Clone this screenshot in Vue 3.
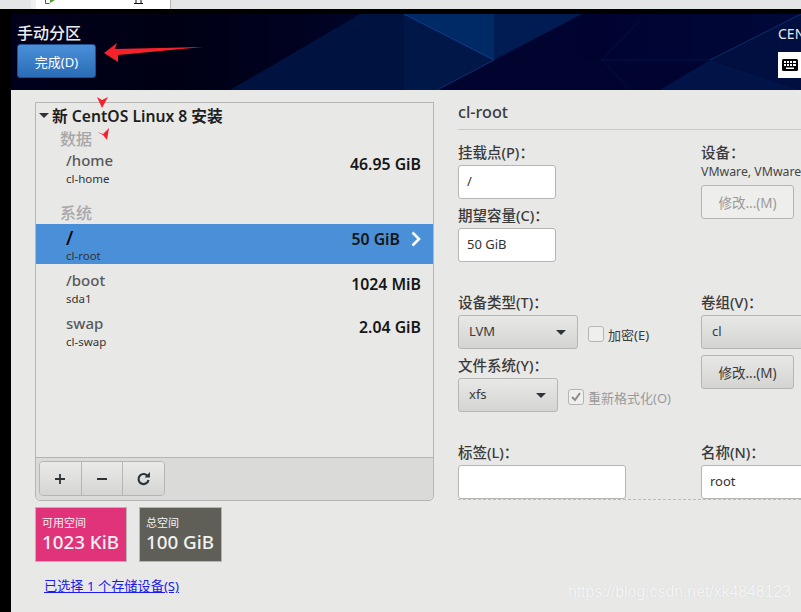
<script setup>
const groups = [
  { name: "数据", cls: "g-data", rows: [{ mount: "/home", dev: "cl-home", size: "46.95 GiB" }] },
  {
    name: "系统",
    cls: "g-sys",
    rows: [
      { mount: "/", dev: "cl-root", size: "50 GiB", selected: true },
      { mount: "/boot", dev: "sda1", size: "1024 MiB" },
      { mount: "swap", dev: "cl-swap", size: "2.04 GiB" },
    ],
  },
];
</script>

<template>
  <div class="screen">
    <div class="strip">
      <div class="tab">
        <svg width="134" height="9" viewBox="0 0 134 9">
          <path d="M9.5 0v3.5h4" fill="none" stroke="#555" stroke-width="1" />
          <polygon points="14,0 19,0 14,3" fill="#4fa02a" />
          <path d="M98 3.5h9M100 0v3M105 0v3" fill="none" stroke="#111" stroke-width="1" />
        </svg>
      </div>
    </div>
    <div class="frame">
      <div class="main">
        <header class="header">
          <svg class="bg" viewBox="11 14 790 76" preserveAspectRatio="none">
            <defs>
              <linearGradient id="sweep" x1="0" x2="1" y1="0" y2="0">
                <stop offset="0" stop-color="#00001c" />
                <stop offset="0.2" stop-color="#000014" />
                <stop offset="0.36" stop-color="#000220" />
                <stop offset="0.5" stop-color="#00062e" />
                <stop offset="0.75" stop-color="#000330" />
                <stop offset="1" stop-color="#00093a" />
              </linearGradient>
            </defs>
            <rect x="11" y="14" width="790" height="76" fill="url(#sweep)" />
            <polygon points="360,14 404,14 494,60 437,90 230,90" fill="#00123f" />
            <polygon points="404,14 494,14 494,60" fill="#002a66" />
            <polygon points="494,14 582,14 494,60" fill="#001c52" />
            <polygon points="404,14 494,60 437,90 404,90" fill="#001748" />
            <polygon points="494,60 710,60 655,90 437,90" fill="#00042e" />
            <polygon points="710,60 801,14 801,90" fill="#000f40" />
            <polygon points="710,60 801,90 660,90" fill="#001448" />
            <line x1="404" y1="14" x2="494" y2="60" stroke="#0a418f" stroke-width="1" />
            <line x1="494" y1="60" x2="437" y2="90" stroke="#0a3272" stroke-width="1" />
            <line x1="710" y1="60" x2="801" y2="14" stroke="#0a2e6c" stroke-width="1" />
            <line x1="600" y1="60" x2="710" y2="60" stroke="#00154a" stroke-width="1" />
            <line x1="602" y1="60" x2="640" y2="20" stroke="#00123f" stroke-width="1" />
            <line x1="602" y1="60" x2="630" y2="90" stroke="#00123f" stroke-width="1" />
          </svg>
          <div class="header-left">
            <h1>手动分区</h1>
            <button class="done">完成(D)</button>
          </div>
          <div class="header-right">
            <span class="brand">CENTOS LINUX 8 安装</span>
            <span class="kbd">
              <svg width="16" height="12" viewBox="0 0 16 12">
                <rect width="16" height="12" rx="1.5" fill="#000" />
                <g fill="#fff">
                  <rect x="2" y="2" width="2" height="2" /><rect x="5" y="2" width="2" height="2" />
                  <rect x="8" y="2" width="2" height="2" /><rect x="11" y="2" width="3" height="2" />
                  <rect x="2" y="5" width="2" height="2" /><rect x="5" y="5" width="2" height="2" />
                  <rect x="8" y="5" width="2" height="2" /><rect x="11" y="5" width="3" height="2" />
                  <rect x="4" y="8.5" width="8" height="1.5" />
                </g>
              </svg>
            </span>
          </div>
        </header>

        <div class="content">
          <section class="left">
            <div class="panel">
              <div class="tree">
                <div class="root-title"><i class="caret"></i>新 CentOS Linux 8 安装</div>
                <template v-for="g in groups" :key="g.name">
                  <div class="group" :class="g.cls">{{ g.name }}</div>
                  <div v-for="r in g.rows" :key="r.dev" class="row" :class="{ selected: r.selected }">
                    <div class="names">
                      <div class="mount">{{ r.mount }}</div>
                      <div class="dev">{{ r.dev }}</div>
                    </div>
                    <div class="size">{{ r.size }}</div>
                    <svg v-if="r.selected" class="chev" width="10" height="16" viewBox="0 0 10 16">
                      <path d="M1.5 1.5 L8 8 L1.5 14.5" fill="none" stroke="#fff" stroke-width="2.6" />
                    </svg>
                  </div>
                </template>
              </div>
              <div class="toolbar">
                <div class="tools">
                  <button class="tool">
                    <svg width="12" height="12" viewBox="0 0 12 12"><path d="M6 1v10M1 6h10" stroke="#2e3436" stroke-width="1.8" /></svg>
                  </button>
                  <button class="tool">
                    <svg width="12" height="12" viewBox="0 0 12 12"><path d="M1 6h10" stroke="#2e3436" stroke-width="1.8" /></svg>
                  </button>
                  <button class="tool">
                    <svg width="15" height="15" viewBox="0 0 14 14">
                      <path d="M11.2 5.2A4.7 4.7 0 1 0 11.7 8.4" fill="none" stroke="#2e3436" stroke-width="2" />
                      <path d="M8 6h5V1z" fill="#2e3436" />
                    </svg>
                  </button>
                </div>
              </div>
            </div>
            <div class="spaces">
              <div class="space free">
                <div class="s-label">可用空间</div>
                <div class="s-value">1023 KiB</div>
              </div>
              <div class="space total">
                <div class="s-label">总空间</div>
                <div class="s-value">100 GiB</div>
              </div>
            </div>
            <a class="devices">已选择 1 个存储设备(S)</a>
          </section>

          <section class="right">
            <div class="title">cl-root</div>
            <div class="form">
              <div class="col-a">
                <label class="lbl">挂载点(P)：</label>
                <div class="input short">/</div>
                <label class="lbl lbl2">期望容量(C)：</label>
                <div class="input short">50 GiB</div>

                <label class="lbl lbl3">设备类型(T)：</label>
                <div class="inline">
                  <div class="select w-lvm">LVM<i class="arrow"></i></div>
                  <span class="check"><i class="box"></i>加密(E)</span>
                </div>
                <label class="lbl lbl2">文件系统(Y)：</label>
                <div class="inline">
                  <div class="select w-xfs">xfs<i class="arrow"></i></div>
                  <span class="check off">
                    <i class="box">
                      <svg width="12" height="12" viewBox="0 0 12 12"><path d="M2 6l3 3 5-7" fill="none" stroke="#8c8c8c" stroke-width="2" /></svg>
                    </i>重新格式化(O)
                  </span>
                </div>

                <label class="lbl lbl4">标签(L)：</label>
                <div class="input long"></div>
              </div>
              <div class="col-b">
                <label class="lbl">设备：</label>
                <div class="vm">VMware, VMware Virtual S</div>
                <button class="btn disabled">修改...(M)</button>

                <label class="lbl lbl5">卷组(V)：</label>
                <div class="select wide">cl</div>
                <button class="btn modify">修改...(M)</button>

                <label class="lbl lbl6">名称(N)：</label>
                <div class="input name">root</div>
              </div>
              <div class="dash"></div>
            </div>
          </section>
        </div>
      </div>
    </div>

    <svg class="marks" width="801" height="612" viewBox="0 0 801 612">
      <polygon points="104,53 117,43 115,49 203,47 118,55 118,62" fill="#f5222a" />
      <polygon points="97,97 102,100 108,97 102,108" fill="#f5222a" />
      <polygon points="97,132 103,134 109,128 107,140 103,135" fill="#f5222a" />
    </svg>
    <div class="watermark">https://blog.csdn.net/xk4848123</div>
  </div>
</template>

<style>
html,
body {
  margin: 0;
  overflow: hidden;
}
</style>

<style scoped>
.screen {
  position: relative;
  width: 801px;
  height: 612px;
  overflow: hidden;
  background: #000;
  font-family: "Noto Sans", "Noto Sans CJK SC", sans-serif;
  color: #2e3436;
}
.strip {
  height: 9px;
  background: #e4e5e7;
  padding-left: 31px;
}
.tab {
  width: 140px;
  height: 9px;
  box-sizing: border-box;
  background: #fff;
  border-left: 5px solid #f0f0f0;
  border-right: 1px solid #b5b5b5;
}
.tab svg {
  display: block;
}
.frame {
  padding: 5px 0 0 11px;
}
.main {
  width: 790px;
  height: 598px;
  background: #e8e8e7;
  overflow: hidden;
}
.header {
  position: relative;
  height: 76px;
  display: flex;
  justify-content: space-between;
  overflow: hidden;
}
.bg {
  position: absolute;
  inset: 0;
  width: 100%;
  height: 100%;
}
.header-left {
  position: relative;
  padding: 9px 0 0 6px;
}
h1 {
  margin: 0 0 1px;
  font-size: 16px;
  line-height: 20px;
  font-weight: 500;
  color: #eee;
}
.done {
  display: block;
  width: 79px;
  height: 34px;
  padding: 0;
  border: 1px solid #1f4f8d;
  border-radius: 3px;
  background: linear-gradient(#4a90d9, #2a6cb6);
  color: #fff;
  font: 13px "Noto Sans", "Noto Sans CJK SC", sans-serif;
}
.header-right {
  position: relative;
  width: 23px;
  flex: none;
  padding-top: 10px;
  white-space: nowrap;
}
.brand {
  display: block;
  font-size: 14px;
  line-height: 20px;
  color: #e8e8e8;
}
.kbd {
  display: flex;
  align-items: center;
  justify-content: center;
  width: 23px;
  height: 26px;
  margin-top: 8px;
  background: #fff;
  box-sizing: border-box;
}
.content {
  display: flex;
  padding: 12px 0 0 24px;
}
.left {
  width: 399px;
  flex: none;
}
.panel {
  height: 399px;
  box-sizing: border-box;
  border: 1px solid #b5b5b3;
  border-radius: 0 0 5px 5px;
  display: flex;
  flex-direction: column;
}
.tree {
  flex: 1;
}
.root-title {
  display: flex;
  align-items: center;
  height: 26px;
  box-sizing: border-box;
  font-size: 15.7px;
  font-weight: 600;
  color: #1e1e1e;
  padding: 0 0 2px 3px;
}
.caret {
  width: 0;
  height: 0;
  margin-right: 3px;
  border-left: 5px solid transparent;
  border-right: 5px solid transparent;
  border-top: 5px solid #2e3436;
}
.group {
  font-size: 16px;
  font-weight: 500;
  line-height: 20px;
  color: #a7a7a7;
  padding-left: 24px;
}
.g-data {
  height: 18px;
}
.g-sys {
  height: 34px;
  padding-top: 13px;
  box-sizing: border-box;
}
.row {
  display: flex;
  align-items: flex-start;
  height: 40px;
  margin-bottom: 3px;
  padding: 4px 12px 0 30px;
  box-sizing: border-box;
}
.row.selected {
  background: #4a90d9;
}
.names {
  flex: 1;
}
.mount {
  font-size: 15px;
  line-height: 18px;
  margin-bottom: 2px;
  font-weight: 500;
  color: #595959;
}
.selected .mount {
  font-size: 19px;
  line-height: 20px;
  margin-bottom: 0;
  color: #000;
}
.dev {
  font-size: 11.5px;
  line-height: 16px;
  color: #333;
}
.size {
  font-size: 15.8px;
  font-weight: 600;
  line-height: 22px;
  margin-top: 2px;
  color: #161616;
}
.chev {
  margin: 3px 0 0 11px;
}
.selected .size {
  margin-top: 0;
}
.toolbar {
  height: 43px;
  flex: none;
  box-sizing: border-box;
  padding: 3px;
  background: #dadad9;
  border-top: 1px solid #b5b5b3;
  border-radius: 0 0 5px 5px;
}
.tools {
  display: flex;
  width: 126px;
  height: 35px;
  box-sizing: border-box;
  border: 1px solid #b5b5b3;
  border-radius: 4px;
  overflow: hidden;
}
.tool {
  flex: 1;
  padding: 0;
  display: flex;
  align-items: center;
  justify-content: center;
  border: 0;
  border-right: 1px solid #b5b5b3;
  background: linear-gradient(#eaeae9, #d5d5d4);
}
.tool:last-child {
  border-right: 0;
}
.spaces {
  display: flex;
  gap: 12px;
  margin-top: 6px;
}
.space {
  height: 55px;
  box-sizing: border-box;
  border: 1px solid #b5b5b3;
  padding: 8px 0 0 6px;
  color: #f2f2f2;
}
.free {
  width: 92px;
  background: #e0337a;
}
.total {
  width: 83px;
  background: #5f5f58;
}
.s-label {
  font-size: 11px;
  line-height: 14px;
}
.s-value {
  font-size: 18.8px;
  font-weight: 500;
  line-height: 24px;
  white-space: nowrap;
}
.devices {
  display: inline-block;
  margin: 15px 0 0 9px;
  font-size: 13.2px;
  line-height: 18px;
  color: #1a1aee;
  text-decoration: underline;
}
.right {
  margin-left: 24px;
  width: 343px;
  flex: none;
}
.title {
  height: 27px;
  line-height: 20px;
  font-size: 16.2px;
  font-weight: 500;
  color: #3c3c3c;
  border-bottom: 1px solid #c9c9c8;
  white-space: nowrap;
}
.form {
  position: relative;
  display: flex;
}
.col-a {
  width: 243px;
  flex: none;
}
.col-b {
  width: 100px;
  flex: none;
  white-space: nowrap;
}
.lbl {
  display: block;
  font-size: 14.5px;
  line-height: 18px;
  padding-bottom: 2px;
  font-weight: 500;
  color: #3a3a3a;
}
.col-a > .lbl:first-child,
.col-b > .lbl:first-child {
  margin-top: 13px;
  margin-bottom: 2px;
}
.lbl2 {
  margin-top: 7px;
  margin-bottom: 2px;
}
.lbl3 {
  margin-top: 31px;
  margin-bottom: 2px;
}
.lbl4 {
  margin-top: 31px;
  margin-bottom: 2px;
}
.input {
  height: 34px;
  box-sizing: border-box;
  border: 1px solid #b5b5b3;
  border-radius: 3px;
  background: #fff;
  padding-left: 8px;
  font-size: 13px;
  line-height: 30px;
  color: #2e3436;
}
.short {
  width: 98px;
}
.long {
  width: 168px;
}
.name {
  width: 120px;
}
.inline {
  display: flex;
  align-items: center;
}
.select {
  position: relative;
  height: 34px;
  box-sizing: border-box;
  border: 1px solid #b5b5b3;
  border-radius: 3px;
  background: linear-gradient(#e8e8e7, #d4d4d3);
  padding-left: 10px;
  font-size: 13px;
  line-height: 30px;
  color: #3a3a3a;
}
.w-lvm {
  width: 120px;
}
.w-xfs {
  width: 100px;
}
.wide {
  width: 120px;
}
.arrow {
  position: absolute;
  right: 11px;
  top: 14px;
  width: 0;
  height: 0;
  border-left: 5px solid transparent;
  border-right: 5px solid transparent;
  border-top: 5px solid #2e3436;
}
.check {
  display: flex;
  align-items: center;
  margin-left: 10px;
  margin-top: 4px;
  font-size: 13px;
  color: #3a3a3a;
  white-space: nowrap;
}
.check.off {
  margin-top: 4px;
  color: #9a9a9a;
}
.box {
  display: flex;
  align-items: center;
  justify-content: center;
  width: 16px;
  height: 16px;
  box-sizing: border-box;
  margin-right: 4px;
  border: 1px solid #b5b5b3;
  border-radius: 3px;
  background: #efefee;
}
.vm {
  font-size: 12.3px;
  line-height: 16px;
  margin-top: -1px;
  color: #454545;
}
.btn {
  display: block;
  width: 93px;
  height: 34px;
  padding: 0;
  border: 1px solid #b5b5b3;
  border-radius: 3px;
  font: 13.5px "Noto Sans", "Noto Sans CJK SC", sans-serif;
}
.disabled {
  margin-top: 5px;
  background: #eeeeed;
  color: #9a9a9a;
}
.lbl5 {
  margin-top: 74px;
  margin-bottom: 2px;
}
.modify {
  margin-top: 6px;
  background: linear-gradient(#e8e8e7, #d4d4d3);
  color: #3a3a3a;
}
.lbl6 {
  margin-top: 54px;
  margin-bottom: 2px;
}
.dash {
  position: absolute;
  left: 0;
  right: 0;
  top: 369px;
  border-top: 1px dashed #bcbcbb;
}
.marks {
  position: absolute;
  left: 0;
  top: 0;
  pointer-events: none;
}
.watermark {
  position: absolute;
  right: 10px;
  top: 583px;
  font-family: "Liberation Sans", sans-serif;
  font-size: 15.8px;
  color: rgba(255, 255, 255, 0.75);
  text-shadow: 0 0 1px rgba(190, 190, 190, 0.5);
  white-space: nowrap;
}
</style>
